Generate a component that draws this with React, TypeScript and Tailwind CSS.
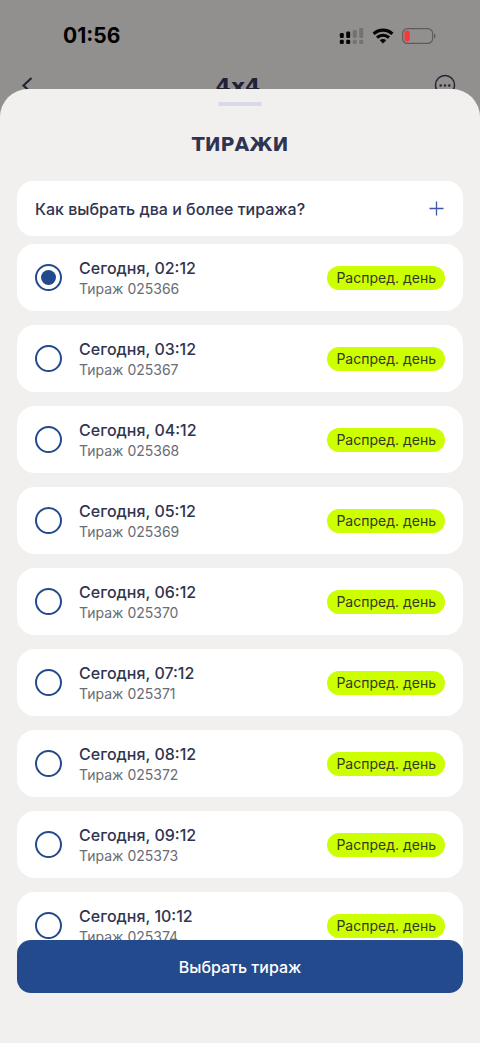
import { useState } from "react";

const draws = [
  { id: "025366", time: "02:12" },
  { id: "025367", time: "03:12" },
  { id: "025368", time: "04:12" },
  { id: "025369", time: "05:12" },
  { id: "025370", time: "06:12" },
  { id: "025371", time: "07:12" },
  { id: "025372", time: "08:12" },
  { id: "025373", time: "09:12" },
  { id: "025374", time: "10:12" },
];

function SignalIcon() {
  return (
    <svg width="25" height="18" viewBox="0 0 25 18" aria-hidden="true">
      <g fill="#050505">
        <rect x="0.8" y="6" width="4" height="5" rx="1.3" />
        <rect x="7.2" y="4.6" width="4" height="6.4" rx="1.3" />
        <rect x="0.8" y="12.700" width="4" height="4.3" rx="1.3" />
        <rect x="7.2" y="12.700" width="4" height="4.3" rx="1.3" />
      </g>
      <g fill="#73726f">
        <rect x="13.8" y="3" width="4" height="8" rx="1.3" />
        <rect x="20.2" y="1" width="4" height="10" rx="1.3" />
        <rect x="13.8" y="12.700" width="4" height="4.3" rx="1.3" />
        <rect x="20.2" y="12.700" width="4" height="4.3" rx="1.3" />
      </g>
    </svg>
  );
}

function WifiIcon() {
  return (
    <svg width="22" height="16" viewBox="0 0 22 16" aria-hidden="true">
      <g fill="none" stroke="#050505" strokeWidth="3.1">
        <path d="M1.6 5.900a13.6 13.6 0 0 1 18.8 0" />
        <path d="M5 9.700a8.6 8.6 0 0 1 12 0" />
      </g>
      <path d="M11 15.6 7.8 12.3a4.6 4.6 0 0 1 6.4 0Z" fill="#050505" />
    </svg>
  );
}

function BatteryIcon() {
  return (
    <svg width="34" height="16" viewBox="0 0 34 16" aria-hidden="true">
      <rect x="0.6" y="0.6" width="30" height="14.8" rx="4.8" fill="none" stroke="#5d5c5a" strokeWidth="1.1" />
      <rect x="2.4" y="2.6" width="5.4" height="10.8" rx="2.4" fill="#f5383a" />
      <path d="M32 5.4c2 .7 2 4.500 0 5.200Z" fill="#5d5c5a" />
    </svg>
  );
}

export default function App() {
  const [selected, setSelected] = useState("025366");
  const [open, setOpen] = useState(false);

  return (
    <div className="flex min-h-screen flex-col bg-[#91908e] font-['Inter',sans-serif] text-[#303450]">
      <header className="h-[89px] overflow-hidden">
        <div className="flex h-[72px] items-center justify-between pr-[44px] pl-[63px]">
          <time className="text-[21px] font-bold text-black">01:56</time>
          <div className="flex items-center gap-2">
            <SignalIcon />
            <WifiIcon />
            <BatteryIcon />
          </div>
        </div>
        <div className="grid grid-cols-3 items-start pr-6 pl-5">
          <button type="button" aria-label="Назад" className="mt-1 justify-self-start">
            <svg width="14" height="20" viewBox="0 0 14 20" fill="none" stroke="#202535" strokeWidth="2.200" aria-hidden="true">
              <path d="M11.500 2 3.500 9.500l8 7.500" />
            </svg>
          </button>
          <span className="justify-self-center font-['DejaVu_Sans',sans-serif] text-[22px] leading-[30px] font-bold text-[#202038]">
            4x4
          </span>
          <button type="button" aria-label="Ещё" className="mt-[2px] justify-self-end">
            <svg width="22" height="22" viewBox="0 0 22 22" aria-hidden="true">
              <circle cx="11" cy="11" r="9.500" fill="none" stroke="#242634" strokeWidth="1.500" />
              <g fill="#242634">
                <circle cx="6.700" cy="11.500" r="1.200" />
                <circle cx="11" cy="11.500" r="1.200" />
                <circle cx="15.300" cy="11.500" r="1.200" />
              </g>
            </svg>
          </button>
        </div>
      </header>

      <main className="flex flex-1 flex-col rounded-t-[28px] bg-[#f1f0ee] px-[17px]">
        <div className="mt-[13px] h-1 w-11 self-center rounded-full bg-[#dad9e6]" />
        <h1 className="mt-[24px] mb-[23px] text-center font-['DejaVu_Sans',sans-serif] text-[19px] leading-[28px] font-bold">
          ТИРАЖИ
        </h1>

        <button
          type="button"
          aria-expanded={open}
          onClick={() => setOpen(!open)}
          className="flex h-[55px] items-center justify-between rounded-2xl bg-white px-[18px] text-left text-[16px] font-medium"
        >
          Как выбрать два и более тиража?
          <svg width="16" height="16" viewBox="0 0 16 16" stroke="#3d56a5" strokeWidth="1.300" aria-hidden="true">
            <path d="M7.500 .5v14M.5 7.500h14" />
          </svg>
        </button>

        <ul className="mt-2 flex flex-col gap-[14px]">
          {draws.map((draw) => (
            <li key={draw.id}>
              <label className="flex h-[67px] items-center rounded-[18px] bg-white px-[18px]">
                <input
                  type="radio"
                  name="draw"
                  value={draw.id}
                  checked={selected === draw.id}
                  onChange={() => setSelected(draw.id)}
                  className="grid size-[27px] shrink-0 appearance-none place-content-center rounded-full border-2 border-[#224a8c] before:size-[15px] before:rounded-full checked:before:bg-[#224a8c]"
                />
                <span className="ml-[17px] flex flex-1 flex-col">
                  <span className="text-[16px] leading-[22px] font-medium">Сегодня, {draw.time}</span>
                  <span className="text-[14px] leading-[20px] text-[#696c74]">Тираж {draw.id}</span>
                </span>
                <span className="flex h-6 items-center rounded-full bg-[#ccff00] px-[9px] text-[14px] text-[#34391f]">
                  Распред. день
                </span>
              </label>
            </li>
          ))}
        </ul>

        <button
          type="button"
          className="relative -mt-[19px] mb-[50px] h-[53px] rounded-[14px] bg-[#224a8c] text-[16px] font-medium text-white"
        >
          Выбрать тираж
        </button>
      </main>
    </div>
  );
}
